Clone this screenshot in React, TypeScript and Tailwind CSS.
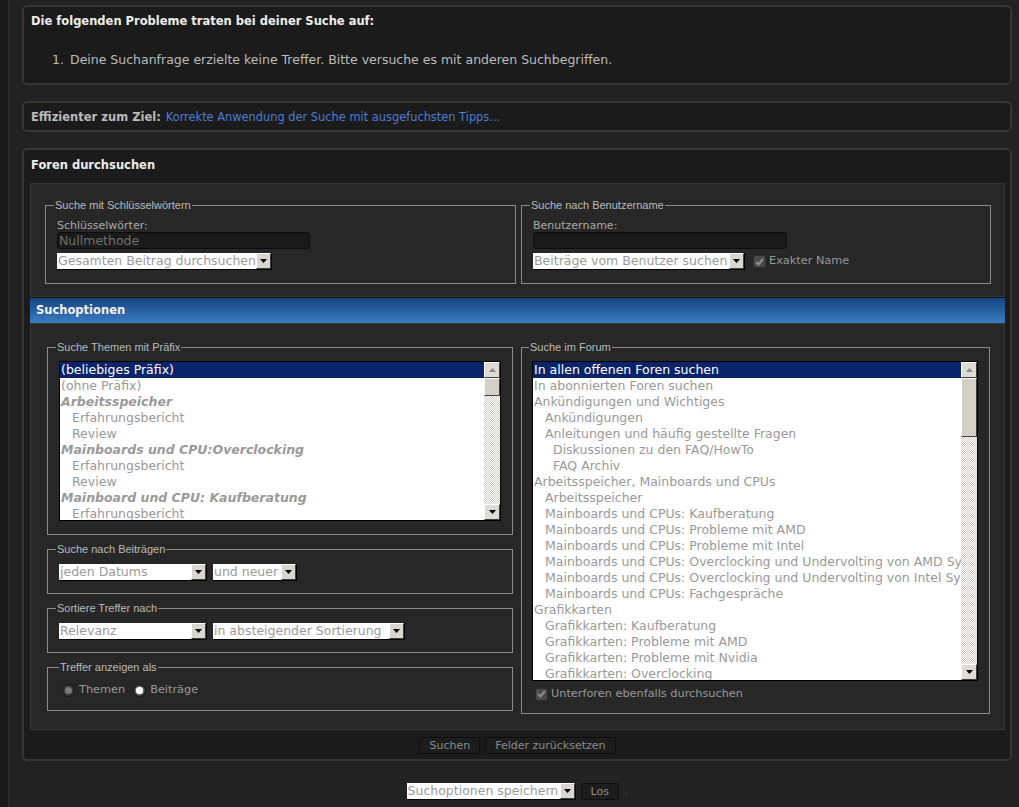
import type { ReactNode } from "react";

type Item = { label: string; level?: number; group?: boolean; selected?: boolean };

const prefixItems: Item[] = [
  { label: "(beliebiges Präfix)", selected: true },
  { label: "(ohne Präfix)" },
  { label: "Arbeitsspeicher", group: true },
  { label: "Erfahrungsbericht", level: 1 },
  { label: "Review", level: 1 },
  { label: "Mainboards und CPU:Overclocking", group: true },
  { label: "Erfahrungsbericht", level: 1 },
  { label: "Review", level: 1 },
  { label: "Mainboard und CPU: Kaufberatung", group: true },
  { label: "Erfahrungsbericht", level: 1 },
];

// the two long forum names are cut by the list's edge in the screenshot
const forumItems: Item[] = [
  { label: "In allen offenen Foren suchen", selected: true },
  { label: "In abonnierten Foren suchen" },
  { label: "Ankündigungen und Wichtiges" },
  { label: "Ankündigungen", level: 1 },
  { label: "Anleitungen und häufig gestellte Fragen", level: 1 },
  { label: "Diskussionen zu den FAQ/HowTo", level: 2 },
  { label: "FAQ Archiv", level: 2 },
  { label: "Arbeitsspeicher, Mainboards und CPUs" },
  { label: "Arbeitsspeicher", level: 1 },
  { label: "Mainboards und CPUs: Kaufberatung", level: 1 },
  { label: "Mainboards und CPUs: Probleme mit AMD", level: 1 },
  { label: "Mainboards und CPUs: Probleme mit Intel", level: 1 },
  { label: "Mainboards und CPUs: Overclocking und Undervolting von AMD Sy", level: 1 },
  { label: "Mainboards und CPUs: Overclocking und Undervolting von Intel Sy", level: 1 },
  { label: "Mainboards und CPUs: Fachgespräche", level: 1 },
  { label: "Grafikkarten" },
  { label: "Grafikkarten: Kaufberatung", level: 1 },
  { label: "Grafikkarten: Probleme mit AMD", level: 1 },
  { label: "Grafikkarten: Probleme mit Nvidia", level: 1 },
  { label: "Grafikkarten: Overclocking", level: 1 },
];

function Arrow({ up = false, dim = false }: { up?: boolean; dim?: boolean }) {
  return (
    <svg width="7" height="4" viewBox="0 0 7 4" className={up ? "rotate-180" : ""}>
      <polygon points="0,0 7,0 3.5,4" fill={dim ? "#8a8a8a" : "#000"} />
    </svg>
  );
}

function DropButton() {
  return (
    <div className="flex w-[15px] shrink-0 items-center justify-center border border-b-[#404040] border-l-white border-r-[#404040] border-t-white bg-[#d9d6cf]">
      <Arrow />
    </div>
  );
}

function Select({ text, w }: { text: string; w: string }) {
  return (
    <div className={`flex h-[17px] border-b border-r border-black bg-white ${w}`}>
      <span className="flex-1 overflow-hidden whitespace-nowrap pl-[1px] text-[12.5px] leading-[16px] text-[#9a9a9a]">
        {text}
      </span>
      <DropButton />
    </div>
  );
}

function Scrollbar({ thumb }: { thumb: string }) {
  return (
    <div className="flex w-[16px] shrink-0 flex-col">
      <div className="flex h-[16px] items-center justify-center border border-b-[#404040] border-l-white border-r-[#404040] border-t-white bg-[#dedbd4]">
        <Arrow up dim />
      </div>
      <div className={`border border-b-[#404040] border-l-white border-r-[#404040] border-t-white bg-[#d4d0c8] ${thumb}`} />
      <div className="flex-1 bg-[repeating-conic-gradient(#d4d0c8_0%_25%,#ffffff_0%_50%)] bg-[length:2px_2px]" />
      <div className="flex h-[16px] items-center justify-center border border-b-[#404040] border-l-white border-r-[#404040] border-t-white bg-[#dedbd4]">
        <Arrow />
      </div>
    </div>
  );
}

function ListBox({ items, h, thumb }: { items: Item[]; h: string; thumb: string }) {
  return (
    <div className={`flex border border-black bg-white ${h}`}>
      <div className="min-w-0 flex-1 overflow-hidden">
        {items.map((it, i) => (
          <div
            key={i}
            className={`h-[16px] overflow-hidden whitespace-nowrap text-[12.5px] leading-[16px] ${
              it.selected ? "bg-[#0a246a] text-white" : "text-[#999]"
            } ${it.group ? "font-bold italic" : ""} ${
              it.level === 1 ? "pl-[12px]" : it.level === 2 ? "pl-[20px]" : "pl-[1px]"
            }`}
          >
            {it.label}
          </div>
        ))}
      </div>
      <Scrollbar thumb={thumb} />
    </div>
  );
}

function Fieldset({ legend, children, className = "" }: { legend: string; children: ReactNode; className?: string }) {
  return (
    <fieldset className={`min-w-0 border border-[#8c8c8c] px-[11px] ${className}`}>
      <legend className="ml-[-3px] px-[1px] font-['Liberation_Sans',sans-serif] text-[11px] leading-[13px] text-[#bbb]">
        {legend}
      </legend>
      {children}
    </fieldset>
  );
}

function Check({ label }: { label: string }) {
  return (
    <label className="flex items-center gap-[3px] text-[11.3px] text-[#999]">
      <span className="flex h-[13px] w-[13px] items-center justify-center rounded-[2px] border border-[#2a2a2a] bg-[#4a4a4a]">
        <svg width="9" height="8" viewBox="0 0 9 8">
          <path d="M1 4 L3.5 6.5 L8 1" stroke="#8d8d8d" strokeWidth="2" fill="none" />
        </svg>
      </span>
      {label}
    </label>
  );
}

function Radio({ label, on = false }: { label: string; on?: boolean }) {
  return (
    <label className="flex items-center gap-[4px] text-[11.3px] text-[#999]">
      <span className="flex h-[13px] w-[13px] items-center justify-center rounded-full border border-[#161616] bg-[#3a3a3a]">
        <span className={`h-[7px] w-[7px] rounded-full ${on ? "bg-white shadow-[0_0_2px_#fff]" : "bg-[#7a7a7a]"}`} />
      </span>
      {label}
    </label>
  );
}

function Button({ children }: { children: ReactNode }) {
  return (
    <button
      type="button"
      className="h-[17px] rounded-[2px] border border-[#0e0e0e] bg-[#1d1d1d] px-[9px] text-[11px] leading-[15px] text-[#8a8a8a]"
    >
      {children}
    </button>
  );
}

export default function App() {
  return (
    <div className="flex h-[807px] w-full overflow-hidden bg-[#222222] font-['DejaVu_Sans',sans-serif]">
      <div className="w-[10px] shrink-0 border-r-2 border-[#2c2c2c] bg-[#181818]" />
      <div className="flex flex-1 flex-col pl-[12px] pr-[7px] pt-[5px]">
        {/* errors */}
        <div className="h-[80px] rounded-[5px] border-2 border-[#363636] bg-[#1b1b1b] px-[7px] pt-[7px]">
          <h2 className="text-[11.5px] font-bold leading-[14px] text-[#eee]">
            Die folgenden Probleme traten bei deiner Suche auf:
          </h2>
          <ol className="mt-[24px] flex pl-[21px] text-[12.5px] leading-[16px] text-[#bbb]">
            <li className="flex">
              <span className="w-[18px]">1.</span>
              Deine Suchanfrage erzielte keine Treffer. Bitte versuche es mit anderen Suchbegriffen.
            </li>
          </ol>
        </div>

        {/* tip */}
        <div className="mt-[16px] flex h-[31px] items-center rounded-[5px] border-2 border-[#363636] bg-[#1b1b1b] px-[7px] pt-[2px]">
          <span className="text-[11.5px] font-bold text-[#bbb]">Effizienter zum Ziel:</span>
          <a className="ml-[5px] text-[11.4px] text-[#4b7bd6]">Korrekte Anwendung der Suche mit ausgefuchsten Tipps...</a>
        </div>

        {/* search form */}
        <div className="mt-[16px] flex h-[613px] flex-col rounded-[5px] border-2 border-[#363636] bg-[#1b1b1b] pl-[6px] pr-[5px] pt-[8px]">
          <h2 className="pl-[1px] text-[11.5px] font-bold leading-[14px] text-[#eee]">Foren durchsuchen</h2>

          <div className="mt-[11px] border border-[#363636] bg-[#272727] pb-[12px] pl-[14px] pr-[13px] pt-[15px]">
            <div className="grid grid-cols-[471px_470px] gap-[5px]">
              <Fieldset legend="Suche mit Schlüsselwörtern" className="pb-[13px] pt-[7px]">
                <div className="text-[11px] leading-[13px] text-[#aaa]">Schlüsselwörter:</div>
                <div className="h-[17px] w-[253px] rounded-[3px] border border-[#0c0c0c] bg-[#1a1a1a] pl-[1px] text-[12.5px] leading-[15px] text-[#6f6f6f]">
                  Nullmethode
                </div>
                <div className="mt-[4px]">
                  <Select text="Gesamten Beitrag durchsuchen" w="w-[215px]" />
                </div>
              </Fieldset>
              <Fieldset legend="Suche nach Benutzername" className="pb-[13px] pt-[7px]">
                <div className="text-[11px] leading-[13px] text-[#aaa]">Benutzername:</div>
                <div className="h-[17px] w-[254px] rounded-[3px] border border-[#0c0c0c] bg-[#1a1a1a]" />
                <div className="mt-[4px] flex items-center gap-[8px]">
                  <Select text="Beiträge vom Benutzer suchen" w="w-[212px]" />
                  <Check label="Exakter Name" />
                </div>
              </Fieldset>
            </div>
          </div>

          <div className="flex h-[26px] items-center border-t border-[#111] bg-gradient-to-b from-[#144580] to-[#3b7cc2] pl-[6px] text-[11.5px] font-bold text-[#f2f2f2]">
            Suchoptionen
          </div>

          <div className="border border-[#363636] bg-[#272727] pb-[15px] pl-[16px] pr-[14px] pt-[17px]">
            <div className="grid grid-cols-[466px_469px] items-start gap-[8px]">
              <div className="flex flex-col">
                <Fieldset legend="Suche Themen mit Präfix" className="pb-[13px] pt-[7px]">
                  <ListBox items={prefixItems} h="h-[160px]" thumb="h-[18px]" />
                </Fieldset>
                <Fieldset legend="Suche nach Beiträgen" className="mt-[8px] pb-[12px] pt-[8px]">
                  <div className="flex gap-[6px]">
                    <Select text="jeden Datums" w="w-[148px]" />
                    <Select text="und neuer" w="w-[84px]" />
                  </div>
                </Fieldset>
                <Fieldset legend="Sortiere Treffer nach" className="mt-[8px] pb-[12px] pt-[8px]">
                  <div className="flex gap-[6px]">
                    <Select text="Relevanz" w="w-[148px]" />
                    <Select text="in absteigender Sortierung" w="w-[192px]" />
                  </div>
                </Fieldset>
                <Fieldset legend="Treffer anzeigen als" className="mt-[8px] pb-[11px] pl-[14px] pt-[8px]">
                  <div className="flex gap-[8px]">
                    <Radio label="Themen" />
                    <Radio label="Beiträge" on />
                  </div>
                </Fieldset>
              </div>
              <Fieldset legend="Suche im Forum" className="pb-[10px] pl-[10px] pr-[11px] pt-[7px]">
                <ListBox items={forumItems} h="h-[320px]" thumb="h-[59px]" />
                <div className="mt-[5px] pl-[3px]">
                  <Check label="Unterforen ebenfalls durchsuchen" />
                </div>
              </Fieldset>
            </div>
          </div>

          <div className="mt-[7px] flex justify-center gap-[5px]">
            <Button>Suchen</Button>
            <Button>Felder zurücksetzen</Button>
          </div>
        </div>

        <div className="mt-[22px] flex items-center justify-center gap-[5px]">
          <Select text="Suchoptionen speichern" w="w-[169px]" />
          <Button>Los</Button>
          <span className="text-[11px] text-[#555]">.</span>
        </div>
      </div>
    </div>
  );
}
